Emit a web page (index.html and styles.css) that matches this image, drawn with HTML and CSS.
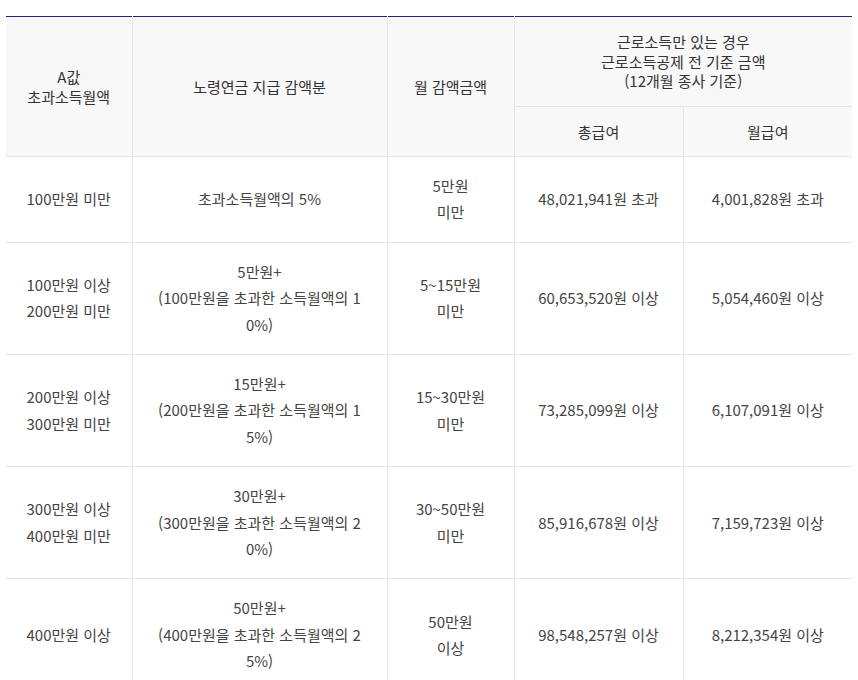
FILE: index.html
```html
<!DOCTYPE html>
<html lang="ko">
<head>
<meta charset="utf-8">
<link rel="stylesheet" href="styles.css">
</head>
<body>
<div class="wrap">
<table class="tbl">
  <colgroup>
    <col class="c1"><col class="c2"><col class="c3"><col class="c4"><col class="c5">
  </colgroup>
  <thead>
    <tr>
      <th rowspan="2">A값<br>초과소득월액</th>
      <th rowspan="2">노령연금 지급 감액분</th>
      <th rowspan="2">월 감액금액</th>
      <th colspan="2">근로소득만 있는 경우<br>근로소득공제 전 기준 금액<br>(12개월 종사 기준)</th>
    </tr>
    <tr>
      <th>총급여</th>
      <th>월급여</th>
    </tr>
  </thead>
  <tbody>
    <tr>
      <td>100만원 미만</td>
      <td class="wide">초과소득월액의 5%</td>
      <td>5만원<br>미만</td>
      <td>48,021,941원 초과</td>
      <td>4,001,828원 초과</td>
    </tr>
    <tr>
      <td>100만원 이상<br>200만원 미만</td>
      <td class="wide">5만원+<br>(100만원을 초과한 소득월액의 10%)</td>
      <td>5~15만원<br>미만</td>
      <td>60,653,520원 이상</td>
      <td>5,054,460원 이상</td>
    </tr>
    <tr>
      <td>200만원 이상<br>300만원 미만</td>
      <td class="wide">15만원+<br>(200만원을 초과한 소득월액의 15%)</td>
      <td>15~30만원<br>미만</td>
      <td>73,285,099원 이상</td>
      <td>6,107,091원 이상</td>
    </tr>
    <tr>
      <td>300만원 이상<br>400만원 미만</td>
      <td class="wide">30만원+<br>(300만원을 초과한 소득월액의 20%)</td>
      <td>30~50만원<br>미만</td>
      <td>85,916,678원 이상</td>
      <td>7,159,723원 이상</td>
    </tr>
    <tr>
      <td>400만원 이상</td>
      <td class="wide">50만원+<br>(400만원을 초과한 소득월액의 25%)</td>
      <td>50만원<br>이상</td>
      <td>98,548,257원 이상</td>
      <td>8,212,354원 이상</td>
    </tr>
  </tbody>
</table>
</div>
</body>
</html>
```
FILE: styles.css
```css
html, body {
  margin: 0;
  padding: 0;
  background: #fff;
}
.wrap {
  padding: 16px 6px 0 6px;
}
.tbl {
  width: 846px;
  border-collapse: collapse;
  table-layout: fixed;
  border-top: 1px solid #2b2178;
  font-family: "Noto Sans CJK KR", "Noto Sans", sans-serif;
  color: #444;
  word-break: break-all;
}
.c1 { width: 126px; }
.c2 { width: 255px; }
.c3 { width: 127px; }
.c4 { width: 169px; }
.c5 { width: 169px; }
.tbl th {
  background: #f8f8f8;
  font-weight: 400;
  font-size: 15px;
  line-height: 19.5px;
  padding: 15px 10px;
  text-align: center;
  vertical-align: middle;
  border: 1px solid #e6e6e6;
  border-top: 0;
  color: #333;
}
.tbl td {
  font-size: 15px;
  line-height: 26.4px;
  padding: 16px 10px;
  text-align: center;
  vertical-align: middle;
  border: 1px solid #e6e6e6;
}
.tbl td.wide {
  padding-left: 24px;
  padding-right: 24px;
}
.tbl tr > :first-child { border-left: 0; }
.tbl tr > :last-child { border-right: 0; }
.tbl thead tr:first-child > th:last-child { border-right: 0; }
```
